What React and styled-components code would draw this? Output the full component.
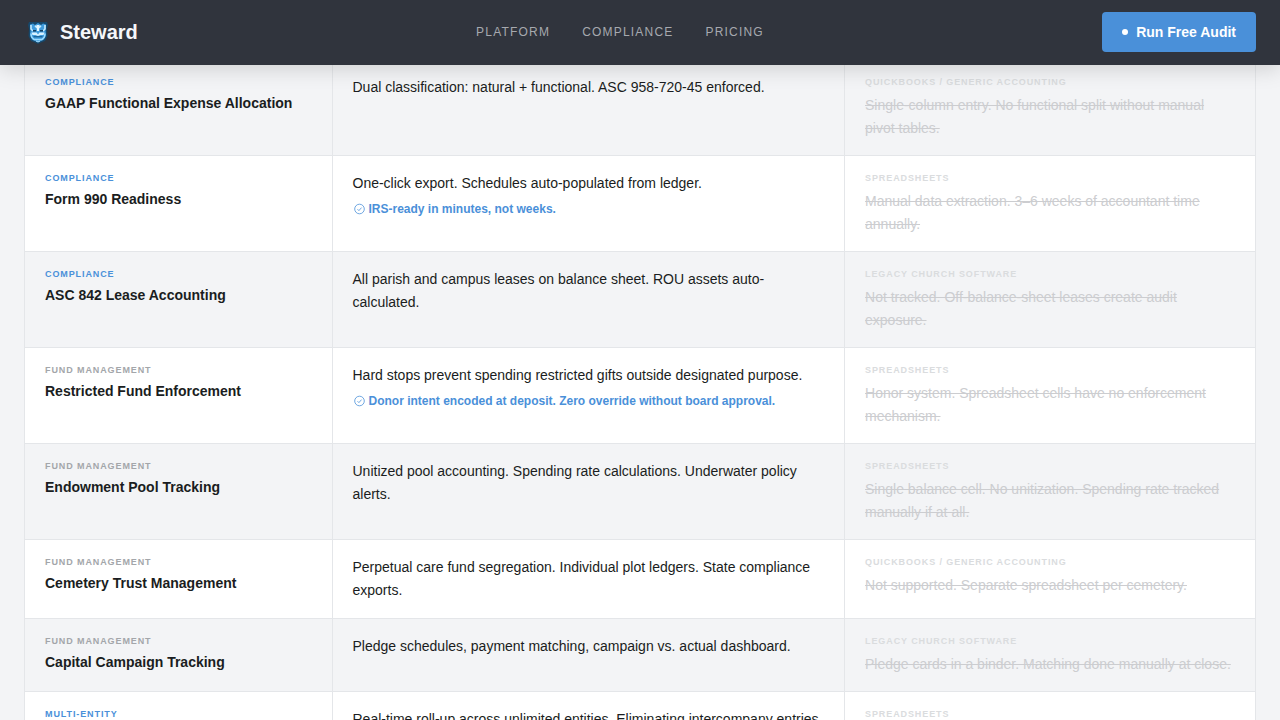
import React from "react";
import styled, { createGlobalStyle } from "styled-components";

const GlobalStyle = createGlobalStyle`
  * { box-sizing: border-box; }
  body {
    margin: 0;
    background: #f3f4f6;
    color: #1a1d21;
    font-family: "Liberation Sans", Arial, sans-serif;
    font-size: 14px;
  }
`;

const Header = styled.header`
  position: sticky;
  top: 0;
  z-index: 10;
  display: flex;
  align-items: center;
  justify-content: space-between;
  padding: 12px 24px;
  background: #30343d;
  border-bottom: 1px solid #30343d;
  box-shadow: 0 4px 20px rgba(0, 0, 0, 0.15);
`;

const Brand = styled.a`
  display: flex;
  align-items: center;
  gap: 8px;
  color: #f5f7fa;
  font-size: 20px;
  font-weight: 700;
  line-height: 28px;
  text-decoration: none;
`;

const Nav = styled.nav`
  display: flex;
  gap: 32px;
`;

const NavLink = styled.a`
  color: #a6a9af;
  font-size: 12px;
  line-height: 16px;
  letter-spacing: 0.1em;
  text-transform: uppercase;
  text-decoration: none;
`;

const AuditButton = styled.button`
  display: flex;
  align-items: center;
  gap: 8px;
  height: 40px;
  padding: 0 20px;
  border: 0;
  border-radius: 4px;
  background: #4a90d9;
  color: #ffffff;
  font: inherit;
  font-weight: 700;
  cursor: pointer;
`;

const Dot = styled.span`
  width: 6px;
  height: 6px;
  border-radius: 50%;
  background: #ffffff;
`;

const Main = styled.main`
  margin-top: -5px;
  padding: 0 24px;
`;

const Table = styled.table`
  width: 100%;
  table-layout: fixed;
  border-collapse: separate;
  border-spacing: 0;
  border: solid #e4e6e9;
  border-width: 0 1px;
`;

const Column = styled.col`
  width: ${(p) => p.$share};
`;

const Row = styled.tr`
  background: #ffffff;
  &:nth-child(odd) { background: #f3f4f6; }
`;

const Cell = styled.td`
  padding: 16px 20px;
  border-bottom: 1px solid #e4e6e9;
  border-right: 1px solid #e4e6e9;
  vertical-align: top;
  line-height: 23px;
`;

const FeatureCell = styled(Cell).attrs({ as: "th", scope: "row" })`
  text-align: left;
  font-weight: 400;
`;

const LegacyCell = styled(Cell)`
  padding-bottom: 15px;
  border-right: 0;
`;

const Tag = styled.div`
  margin-bottom: 4px;
  color: ${(p) => p.$color};
  font-size: 9px;
  font-weight: 700;
  line-height: 13px;
  letter-spacing: 0.1em;
  text-transform: uppercase;
`;

const SourceTag = styled(Tag)`
  margin-bottom: 5px;
`;

const Feature = styled.div`
  font-weight: 700;
  line-height: 20px;
`;

const Highlight = styled.div`
  display: flex;
  align-items: center;
  gap: 4px;
  margin-top: 4px;
  color: #4a90d9;
  font-size: 12px;
  font-weight: 700;
  line-height: 20px;
`;

const Struck = styled.s`
  color: #cccdd0;
`;

const LionMark = () => (
  <svg width="28" height="28" viewBox="0 0 28 28" fill="none" aria-hidden="true">
    <path d="M5 4h18l1 3-1 4 .5 7-2.500 5-4 1.500L14 26l-3-1.500L7 23l-2.500-5L5 11 4 7Z" fill="#16486c" />
    <path d="M6 6.500 9 5.500l2 1.500 3-2 3 2 2-1.500 3 1-.5 4.500.5 6-2 4.500-3 1.500-3 1.200-3-1.200L8 21.500 6 17l.5-6Z" fill="#3f9bdc" />
    <path d="M7 7v4l2 2M21 7v4l-2 2M11 8l3 2 3-2" stroke="#c6ebff" strokeWidth="1.600" />
    <path d="M12.500 7h3l-.5 6h-2Z" fill="#e4f6ff" />
    <path d="M7.500 14.500h5l1.500 2 1.500-2h5l-1 2.500h-3l-2.500 1-2.500-1h-3Z" fill="#d9f2ff" />
    <path d="M9 12.700h3M16 12.700h3" stroke="#123f61" strokeWidth="1.600" />
    <path d="M7 15.500 7.500 19l2.500 2.500h8l2.500-2.500.5-3.500" stroke="#9cdcff" strokeWidth="1.500" />
    <path d="M9.500 18.700h9" stroke="#1c6496" strokeWidth="1.300" />
    <path d="m12 23 2 1 2-1" stroke="#a8e0ff" />
  </svg>
);

const CheckMark = () => (
  <svg width="12" height="12" viewBox="0 0 12 12" fill="none" stroke="#4a90d9" strokeWidth="0.8" aria-hidden="true">
    <circle cx="6.500" cy="6" r="4.800" />
    <path d="m4.500 6.200 1.400 1.400 2.700-3" />
  </svg>
);

const BLUE = "#4a90d9";
const GRAY = "#a3a6aa";
const QUICKBOOKS = "QuickBooks / Generic Accounting";
const SHEETS = "Spreadsheets";
const LEGACY = "Legacy Church Software";

const rows = [
  { group: "Compliance", color: BLUE, name: "GAAP Functional Expense Allocation", text: "Dual classification: natural + functional. ASC 958-720-45 enforced.", source: QUICKBOOKS, old: "Single-column entry. No functional split without manual pivot tables." },
  { group: "Compliance", color: BLUE, name: "Form 990 Readiness", text: "One-click export. Schedules auto-populated from ledger.", note: "IRS-ready in minutes, not weeks.", source: SHEETS, old: "Manual data extraction. 3–6 weeks of accountant time annually." },
  { group: "Compliance", color: BLUE, name: "ASC 842 Lease Accounting", text: "All parish and campus leases on balance sheet. ROU assets auto-calculated.", source: LEGACY, old: "Not tracked. Off-balance-sheet leases create audit exposure." },
  { group: "Fund Management", color: GRAY, name: "Restricted Fund Enforcement", text: "Hard stops prevent spending restricted gifts outside designated purpose.", note: "Donor intent encoded at deposit. Zero override without board approval.", source: SHEETS, old: "Honor system. Spreadsheet cells have no enforcement mechanism." },
  { group: "Fund Management", color: GRAY, name: "Endowment Pool Tracking", text: "Unitized pool accounting. Spending rate calculations. Underwater policy alerts.", source: SHEETS, old: "Single balance cell. No unitization. Spending rate tracked manually if at all." },
  { group: "Fund Management", color: GRAY, name: "Cemetery Trust Management", text: "Perpetual care fund segregation. Individual plot ledgers. State compliance exports.", source: QUICKBOOKS, old: "Not supported. Separate spreadsheet per cemetery." },
  { group: "Fund Management", color: GRAY, name: "Capital Campaign Tracking", text: "Pledge schedules, payment matching, campaign vs. actual dashboard.", source: LEGACY, old: "Pledge cards in a binder. Matching done manually at close." },
  { group: "Multi-Entity", color: BLUE, text: "Real-time roll-up across unlimited entities. Eliminating intercompany entries", source: SHEETS },
];

export default function App() {
  return (
    <>
      <GlobalStyle />
      <Header>
        <Brand href="#"><LionMark />Steward</Brand>
        <Nav>
          <NavLink href="#platform">Platform</NavLink>
          <NavLink href="#compliance">Compliance</NavLink>
          <NavLink href="#pricing">Pricing</NavLink>
        </Nav>
        <AuditButton type="button"><Dot />Run Free Audit</AuditButton>
      </Header>
      <Main>
        <Table>
          <colgroup>
            <Column $share="25%" />
            <Column $share="41.67%" />
            <Column $share="33.33%" />
          </colgroup>
          <tbody>
            {rows.map((r) => (
              <Row key={r.text}>
                <FeatureCell>
                  <Tag $color={r.color}>{r.group}</Tag>
                  {r.name && <Feature>{r.name}</Feature>}
                </FeatureCell>
                <Cell>
                  {r.text}
                  {r.note && <Highlight><CheckMark />{r.note}</Highlight>}
                </Cell>
                <LegacyCell>
                  <SourceTag $color="#dadcde">{r.source}</SourceTag>
                  {r.old && <Struck>{r.old}</Struck>}
                </LegacyCell>
              </Row>
            ))}
          </tbody>
        </Table>
      </Main>
    </>
  );
}
